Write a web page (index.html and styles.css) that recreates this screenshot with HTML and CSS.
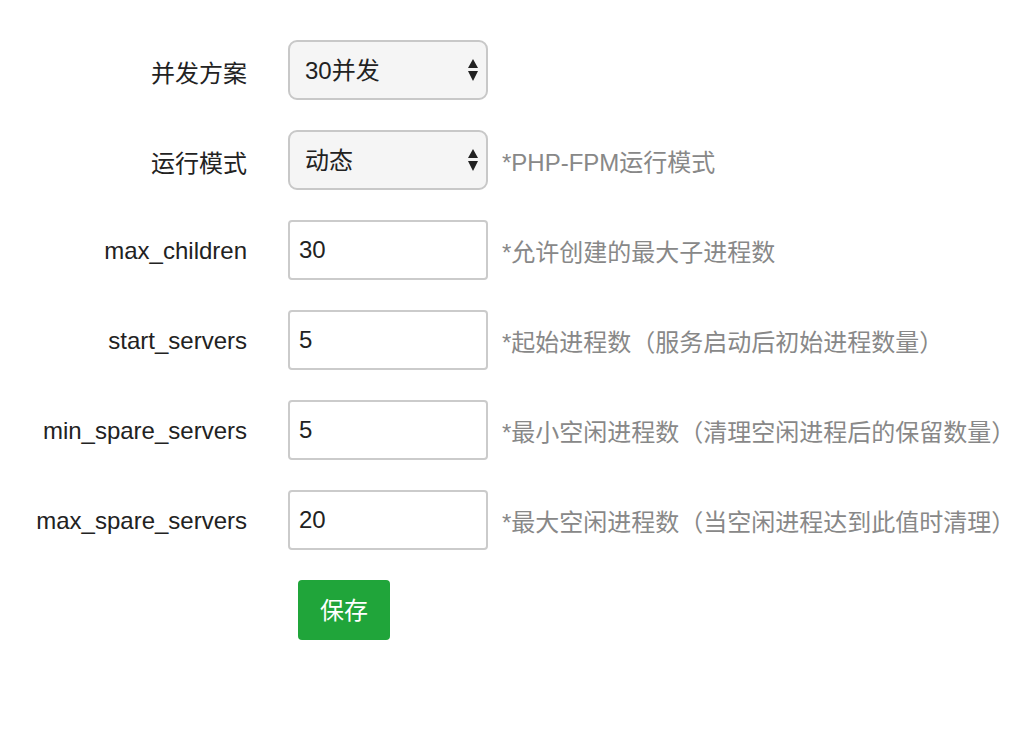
FILE: index.html
```html
<!DOCTYPE html>
<html lang="zh-CN">
<head>
<meta charset="utf-8">
<title>PHP-FPM</title>
<link rel="stylesheet" href="styles.css">
</head>
<body>
<form class="form">
  <div class="row">
    <label class="label">并发方案</label>
    <div class="select-wrap">
      <select class="select"><option>30并发</option></select>
      <svg class="arrows" width="10" height="22" viewBox="0 0 10 22"><path d="M5 0 L10 9 L0 9 Z M0 12 L10 12 L5 22 Z" fill="#222"/></svg>
    </div>
  </div>
  <div class="row">
    <label class="label">运行模式</label>
    <div class="select-wrap">
      <select class="select"><option>动态</option></select>
      <svg class="arrows" width="10" height="22" viewBox="0 0 10 22"><path d="M5 0 L10 9 L0 9 Z M0 12 L10 12 L5 22 Z" fill="#222"/></svg>
    </div>
    <span class="hint">*PHP-FPM运行模式</span>
  </div>
  <div class="row">
    <label class="label">max_children</label>
    <input class="input" type="text" value="30">
    <span class="hint">*允许创建的最大子进程数</span>
  </div>
  <div class="row">
    <label class="label">start_servers</label>
    <input class="input" type="text" value="5">
    <span class="hint">*起始进程数（服务启动后初始进程数量）</span>
  </div>
  <div class="row">
    <label class="label">min_spare_servers</label>
    <input class="input" type="text" value="5">
    <span class="hint">*最小空闲进程数（清理空闲进程后的保留数量）</span>
  </div>
  <div class="row">
    <label class="label">max_spare_servers</label>
    <input class="input" type="text" value="20">
    <span class="hint">*最大空闲进程数（当空闲进程达到此值时清理）</span>
  </div>
  <div class="row row-btn">
    <span class="label"></span>
    <button type="button" class="btn">保存</button>
  </div>
</form>
</body>
</html>
```
FILE: styles.css
```css
html, body {
  margin: 0;
  padding: 0;
  background: #fff;
}
body {
  font-family: "Liberation Sans", "Noto Sans CJK SC", sans-serif;
  font-size: 24px;
  color: #333;
}
.form {
  padding-top: 40px;
  display: flex;
  flex-direction: column;
  gap: 30px;
}
.row {
  display: flex;
  align-items: center;
  height: 60px;
}
.label {
  width: 247px;
  flex: none;
  text-align: right;
  margin-right: 41px;
  padding-top: 2px;
  color: #222;
}
.select-wrap {
  position: relative;
  width: 200px;
  height: 60px;
  flex: none;
}
.select {
  -webkit-appearance: none;
  appearance: none;
  width: 200px;
  height: 60px;
  box-sizing: border-box;
  border: 2px solid #c8c8c8;
  border-radius: 9px;
  background: #f5f5f5;
  font-family: inherit;
  font-size: 24px;
  color: #222;
  padding: 0 0 0 15px;
  outline: none;
}
.arrows {
  position: absolute;
  right: 10px;
  top: 19px;
  pointer-events: none;
}
.input {
  width: 200px;
  height: 60px;
  box-sizing: border-box;
  border: 2px solid #cbcbcb;
  border-radius: 4px;
  background: #fff;
  font-family: inherit;
  font-size: 24px;
  color: #222;
  padding: 0 0 0 9px;
  outline: none;
  flex: none;
}
.hint {
  margin-left: 14px;
  color: #888;
  white-space: nowrap;
}
.btn {
  margin-left: 10px;
  width: 92px;
  height: 60px;
  border: none;
  border-radius: 4px;
  background: #20a53a;
  color: #fff;
  font-family: inherit;
  font-size: 24px;
  padding: 0 0 4px 0;
}
```
